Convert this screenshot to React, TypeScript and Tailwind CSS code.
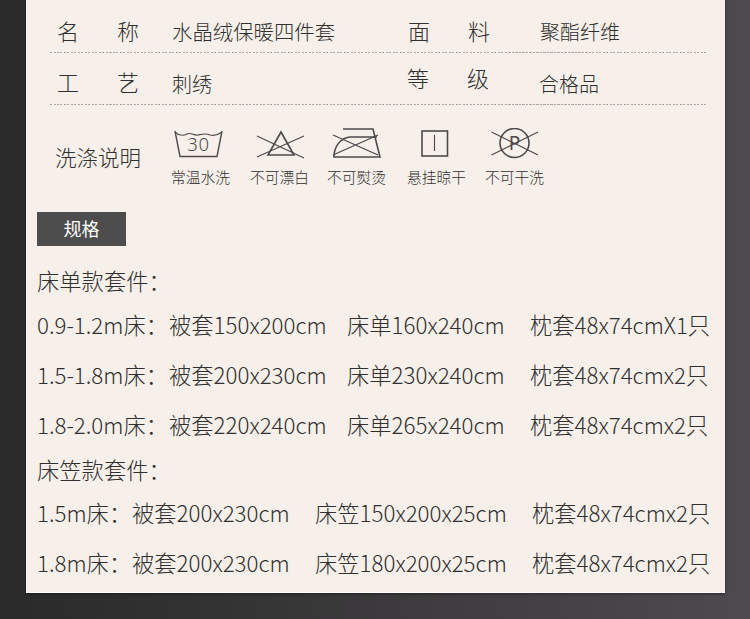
const font = "[font-family:'Noto_Sans_CJK_SC','Noto_Sans',sans-serif]";
const stroke = "#4e4a4c";

const WashIcon = () => (
  <svg width="59" height="32" viewBox="171 128 59 32" fill="none" stroke={stroke} strokeWidth="1.4">
    <path d="M175 131 L180 156.5 H217 L222 131" />
    <path d="M175 132 C179 136 183 136 187 134 C191 132 194 136 198 135 C203 134 206 133 210 135 C214 136 218 135 222 132" strokeWidth="1.1" />
    <text x="198.5" y="151" textAnchor="middle" fontSize="18.5" letterSpacing="0.6" fill={stroke} stroke="none" fontFamily="Noto Sans, sans-serif" fontWeight="300">30</text>
  </svg>
);

const NoBleachIcon = () => (
  <svg width="59" height="32" viewBox="250 128 59 32" fill="none" stroke={stroke} strokeWidth="1.6">
    <path d="M281 132 L268 155 H294 Z" />
    <path d="M257 136 L304 158 M257 157 L304 136" strokeWidth="1.2" />
  </svg>
);

const NoIronIcon = () => (
  <svg width="59" height="32" viewBox="327 128 59 32" fill="none" stroke={stroke} strokeWidth="1.6">
    <path d="M343 129 H373 L380 157 H334 C334 147 340 138 350 137 H377" />
    <path d="M333 135 L378 155 M333 155 L378 135" strokeWidth="1.3" />
  </svg>
);

const HangIcon = () => (
  <svg width="59" height="32" viewBox="407 128 59 32" fill="none" stroke={stroke} strokeWidth="1.6">
    <rect x="422" y="131" width="25.5" height="25" />
    <path d="M434.5 135 V151" strokeWidth="1.1" />
  </svg>
);

const NoDryCleanIcon = () => (
  <svg width="59" height="32" viewBox="485 128 59 32" fill="none" stroke={stroke} strokeWidth="1.6">
    <circle cx="514.5" cy="143" r="14.5" />
    <path d="M491.5 132 L538 155 M491.5 155 L538 132" strokeWidth="1.2" />
    <text x="514.5" y="150" textAnchor="middle" fontSize="19" fill={stroke} stroke="none" fontFamily="Noto Sans, sans-serif">P</text>
  </svg>
);

const care = [
  { icon: <WashIcon />, label: "常温水洗", ml: "ml-0" },
  { icon: <NoBleachIcon />, label: "不可漂白", ml: "ml-[20px]" },
  { icon: <NoIronIcon />, label: "不可熨烫", ml: "ml-[18px]" },
  { icon: <HangIcon />, label: "悬挂晾干", ml: "ml-[21px]" },
  { icon: <NoDryCleanIcon />, label: "不可干洗", ml: "ml-[19px]" },
];

const sheetRows = [
  ["0.9-1.2m床：", "被套150x200cm", "床单160x240cm", "枕套48x74cmX1只"],
  ["1.5-1.8m床：", "被套200x230cm", "床单230x240cm", "枕套48x74cmx2只"],
  ["1.8-2.0m床：", "被套220x240cm", "床单265x240cm", "枕套48x74cmx2只"],
];

const fittedRows = [
  ["1.5m床：", "被套200x230cm", "床笠150x200x25cm", "枕套48x74cmx2只"],
  ["1.8m床：", "被套200x230cm", "床笠180x200x25cm", "枕套48x74cmx2只"],
];

const Dots = () => (
  <div className="ml-[24px] w-[656px] h-px bg-[repeating-linear-gradient(90deg,#a8a4a0_0_2px,transparent_2px_3.5px)]" />
);

export default function App() {
  return (
    <div className={`${font} w-[750px] h-[619px] overflow-hidden bg-gradient-to-r from-[#2a2a2a] to-[#4e4a4e] text-[#303030]`}>
      <div className="ml-[26px] w-[699px] h-[593px] bg-[#f7efe9] border-b border-white shadow-[0_1px_3px_rgba(0,0,0,0.4)]">
        <div className="ml-[24px] w-[656px] h-[52px] flex font-light">
          <div className="w-[122px] pl-[7px] pt-[10px] flex text-[22px] leading-[40px]">
            <span className="w-[60px]">名</span>
            <span>称</span>
          </div>
          <div className="w-[236px] pt-[11px] text-[20.4px] leading-[40px]">水晶绒保暖四件套</div>
          <div className="w-[132px] pt-[10px] flex text-[22px] leading-[40px]">
            <span className="w-[60px]">面</span>
            <span>料</span>
          </div>
          <div className="pt-[12px] text-[20px] leading-[40px]">聚酯纤维</div>
        </div>
        <Dots />
        <div className="ml-[24px] w-[656px] h-[51px] flex font-light">
          <div className="w-[122px] pl-[7px] pt-[8px] flex text-[22px] leading-[40px]">
            <span className="w-[60px]">工</span>
            <span>艺</span>
          </div>
          <div className="w-[236px] pt-[11px] text-[20px] leading-[40px]">刺绣</div>
          <div className="w-[132px] pt-[4px] -ml-px flex text-[22px] leading-[40px]">
            <span className="w-[60px]">等</span>
            <span>级</span>
          </div>
          <div className="pt-[11px] text-[20px] leading-[40px]">合格品</div>
        </div>
        <Dots />
        <div className="mt-[23px] ml-[29px] flex h-[84px]">
          <div className="w-[116px] text-[21.5px] leading-[58px] font-light">洗涤说明</div>
          <div className="flex">
            {care.map((item) => (
              <div key={item.label} className={`${item.ml} w-[59px] flex flex-col`}>
                {item.icon}
                <div className="mt-[7px] text-[14.75px] leading-[20px] font-light whitespace-nowrap">{item.label}</div>
              </div>
            ))}
          </div>
        </div>
        <div className="ml-[11px] w-[89px] h-[34px] bg-[#4d4d4d] text-white text-[18px] leading-[32px] text-center">规格</div>
        <div className="ml-[11px] mt-[18px] text-[22.3px] font-light whitespace-nowrap">
          <div className="h-[32px] leading-[32px]">床单款套件：</div>
          <div className="mt-[3px]">
            {sheetRows.map((row) => (
              <div key={row[0]} className="flex h-[50px] leading-[50px]">
                <span className="w-[132px]">{row[0]}</span>
                <span className="w-[178px]">{row[1]}</span>
                <span className="w-[183px]">{row[2]}</span>
                <span>{row[3]}</span>
              </div>
            ))}
          </div>
          <div className="mt-px h-[37px] leading-[38px]">床笠款套件：</div>
          {fittedRows.map((row) => (
            <div key={row[0]} className="flex h-[50px] leading-[50px]">
              <span className="w-[95px]">{row[0]}</span>
              <span className="w-[183px]">{row[1]}</span>
              <span className="w-[217px]">{row[2]}</span>
              <span>{row[3]}</span>
            </div>
          ))}
        </div>
      </div>
    </div>
  );
}
